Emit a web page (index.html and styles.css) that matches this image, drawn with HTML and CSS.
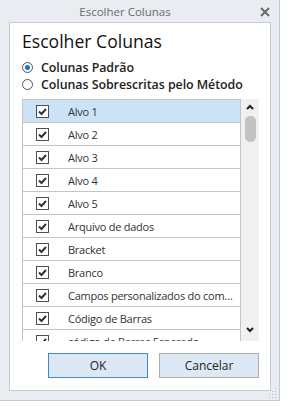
FILE: index.html
```html
<!DOCTYPE html>
<html lang="pt">
<head>
<meta charset="utf-8">
<title>Escolher Colunas</title>
<link rel="stylesheet" href="styles.css">
</head>
<body>
<div class="window">
  <div class="titlebar">
    <span class="title">Escolher Colunas</span>
    <span class="close"><svg width="10" height="10" viewBox="0 0 10 10"><path d="M1 1L9 9M9 1L1 9" stroke="#6a6a6a" stroke-width="2" fill="none"/></svg></span>
  </div>
  <div class="panel">
    <h1 class="heading">Escolher Colunas</h1>
    <div class="radios">
      <label class="radio"><span class="dot on"></span>Colunas Padrão</label>
      <label class="radio"><span class="dot"></span>Colunas Sobrescritas pelo Método</label>
    </div>
    <div class="list">
      <div class="rows">
        <div class="row selected"><span class="cb"></span><span class="txt">Alvo 1</span></div>
        <div class="row"><span class="cb"></span><span class="txt">Alvo 2</span></div>
        <div class="row"><span class="cb"></span><span class="txt">Alvo 3</span></div>
        <div class="row"><span class="cb"></span><span class="txt">Alvo 4</span></div>
        <div class="row"><span class="cb"></span><span class="txt">Alvo 5</span></div>
        <div class="row"><span class="cb"></span><span class="txt">Arquivo de dados</span></div>
        <div class="row"><span class="cb"></span><span class="txt">Bracket</span></div>
        <div class="row"><span class="cb"></span><span class="txt">Branco</span></div>
        <div class="row"><span class="cb"></span><span class="txt">Campos personalizados do componente</span></div>
        <div class="row"><span class="cb"></span><span class="txt">Código de Barras</span></div>
        <div class="row"><span class="cb"></span><span class="txt">código de Barras Esperado</span></div>
      </div>
      <div class="scrollbar">
        <svg class="arrow" width="8" height="6" viewBox="0 0 8 6"><path d="M1 5L4 2L7 5" stroke="#222" stroke-width="2" fill="none"/></svg>
        <div class="thumb"></div>
        <div class="spacer"></div>
        <svg class="arrow" width="8" height="6" viewBox="0 0 8 6"><path d="M1 1L4 4L7 1" stroke="#222" stroke-width="2" fill="none"/></svg>
      </div>
    </div>
    <div class="buttons">
      <button class="btn primary">OK</button>
      <button class="btn">Cancelar</button>
    </div>
  </div>
  <svg class="grip" width="10" height="10" viewBox="0 0 10 10">
    <g fill="#b4b8be">
      <rect x="8" y="0" width="1" height="1"/>
      <rect x="8" y="3" width="1" height="1"/><rect x="5" y="3" width="1" height="1"/>
      <rect x="8" y="6" width="1" height="1"/><rect x="5" y="6" width="1" height="1"/><rect x="2" y="6" width="1" height="1"/>
      <rect x="8" y="9" width="1" height="1"/><rect x="5" y="9" width="1" height="1"/><rect x="2" y="9" width="1" height="1"/>
    </g>
  </svg>
</div>
</body>
</html>
```

FILE: styles.css
```css
* { box-sizing: border-box; }
html, body { margin: 0; padding: 0; background: #ffffff; }
body { font-family: "Open Sans", "Noto Sans", sans-serif; }

.window {
  position: relative;
  width: 280px;
  height: 401px;
  background: #e9ecf1;
  border-right: 1px solid #c6cad0;
  border-bottom: 1px solid #c6cad0;
  display: flex;
  flex-direction: column;
}

.titlebar {
  height: 22px;
  display: flex;
  align-items: center;
}
.title {
  flex: 1;
  text-align: center;
  font-size: 11.5px;
  color: #6b6b6b;
  line-height: 22px;
  padding-top: 1px;
}
.close {
  width: 29px;
  display: flex;
  justify-content: flex-start;
  padding-left: 10px;
  padding-top: 1px;
}

.panel {
  margin: 0 8px 9px 9px;
  flex: 1;
  background: #ffffff;
  border: 1px solid #c6cad0;
  padding: 6px 11px 0 12px;
  display: flex;
  flex-direction: column;
}

.heading {
  margin: 0;
  font-size: 17.6px;
  font-weight: 400;
  line-height: 24px;
  color: #111;
}

.radios {
  margin-top: 6px;
  display: flex;
  flex-direction: column;
}
.radio {
  display: flex;
  align-items: center;
  height: 17px;
  font-size: 12.4px;
  font-weight: 600;
  color: #222;
  letter-spacing: -0.05px;
}
.dot {
  width: 11px;
  height: 11px;
  border: 1px solid #555;
  border-radius: 50%;
  margin-right: 8px;
  display: flex;
  align-items: center;
  justify-content: center;
}
.dot.on::after {
  content: "";
  width: 5px;
  height: 5px;
  border-radius: 50%;
  background: #0a78d7;
}

.list {
  margin-top: 6px;
  height: 242px;
  display: flex;
}
.rows {
  flex: 1;
  overflow: hidden;
  border-left: 1px solid #c4c4c4;
  border-top: 1px solid #c4c4c4;
  border-right: 1px solid #c4c4c4;
}
.row {
  height: 23px;
  border-bottom: 1px solid #c4c4c4;
  display: flex;
  align-items: center;
  padding-left: 13px;
}
.row.selected { background: #cce3f7; }
.cb {
  width: 13px;
  height: 13px;
  flex: none;
  border: 1px solid #4e4e4e;
  background: #fff url("data:image/svg+xml;utf8,<svg xmlns='http://www.w3.org/2000/svg' width='11' height='11' viewBox='0 0 11 11'><path d='M2 5.5L4.5 8L9 3' stroke='%23333' stroke-width='2' fill='none'/></svg>") center/11px 11px no-repeat;
}
.txt {
  margin-left: 19px;
  font-size: 11px;
  letter-spacing: -0.25px;
  color: #333;
  white-space: nowrap;
  overflow: hidden;
  text-overflow: ellipsis;
  padding-right: 3px;
}

.scrollbar {
  width: 18px;
  background: #f0f0f0;
  display: flex;
  flex-direction: column;
  align-items: center;
  padding: 5px 0 8px;
}
.arrow { flex: none; }
.thumb {
  margin-top: 6px;
  width: 11px;
  height: 26px;
  border-radius: 5px;
  background: #c2c2c2;
}
.spacer { flex: 1; }

.buttons {
  margin-top: 12px;
  display: flex;
  justify-content: flex-end;
  gap: 11px;
}
.btn {
  width: 100px;
  height: 25px;
  background: #dde8f5;
  border: 1px solid #adadad;
  font-family: "Open Sans", "Noto Sans", sans-serif;
  font-size: 12px;
  color: #222;
  padding: 0;
}
.btn.primary { border-color: #3c8ac8; }

.grip {
  position: absolute;
  right: 2px;
  bottom: 2px;
}
```
